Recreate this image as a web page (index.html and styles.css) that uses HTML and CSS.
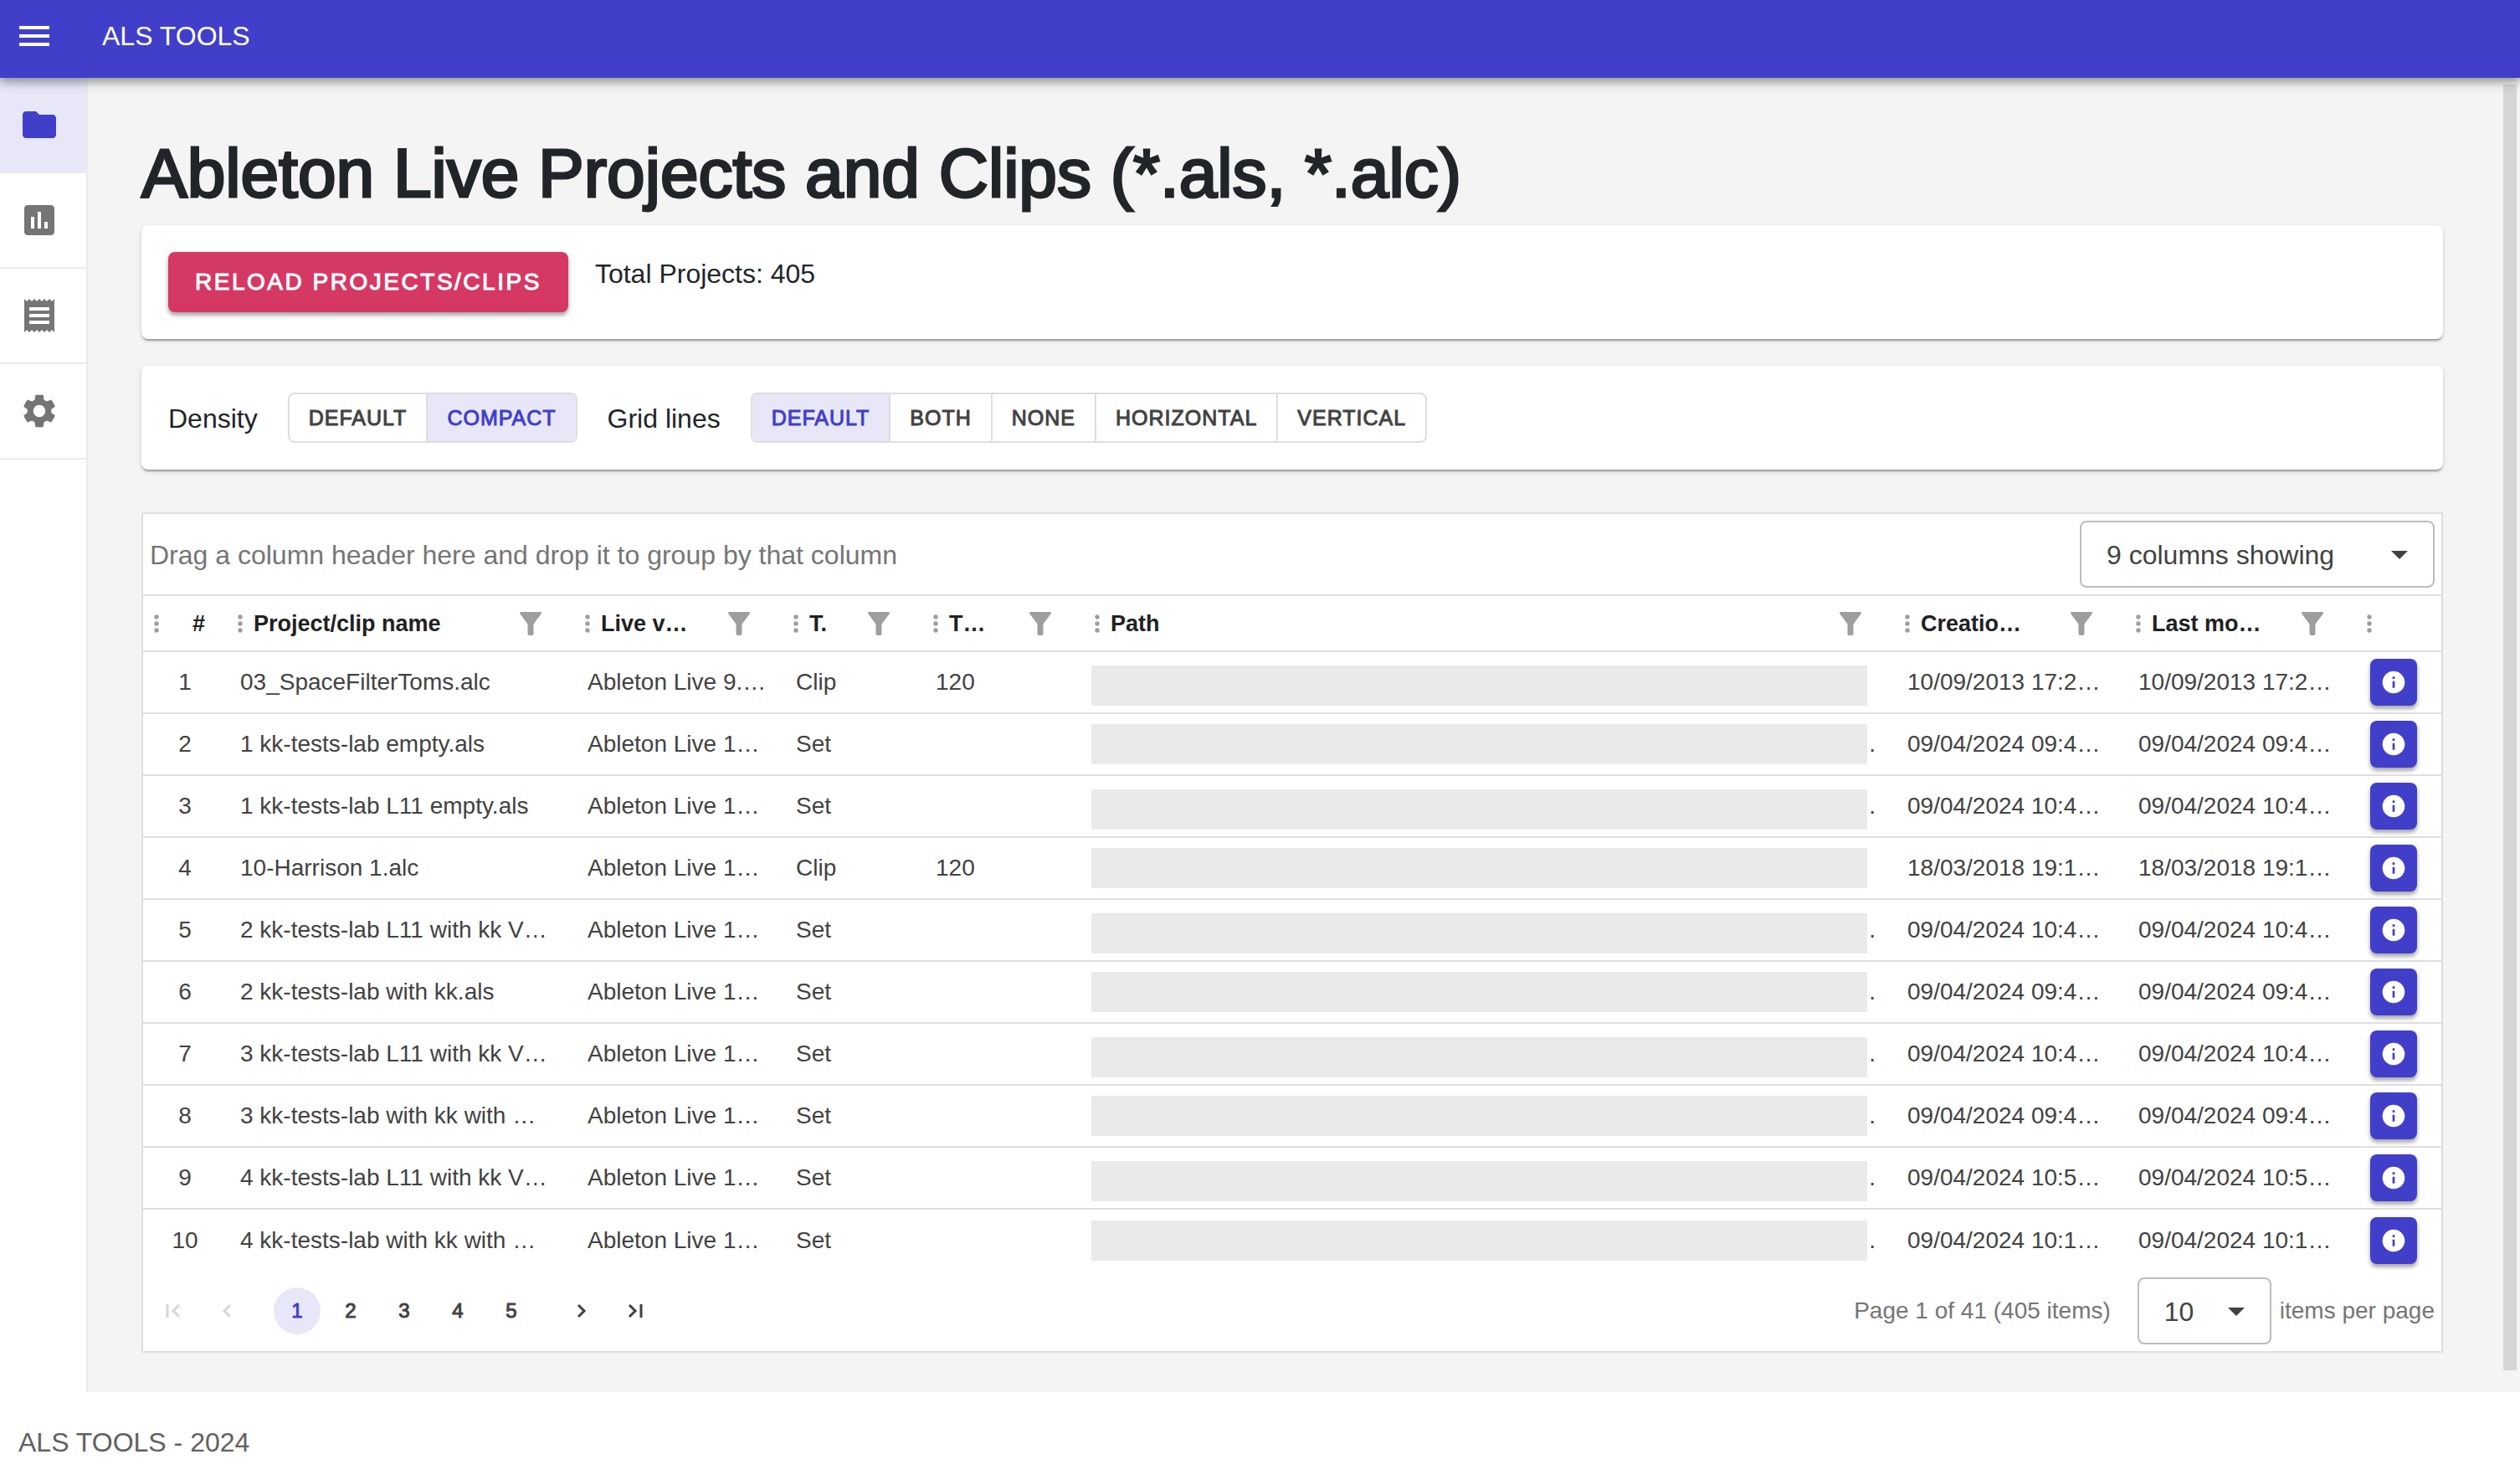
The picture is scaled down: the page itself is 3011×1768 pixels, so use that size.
FILE: index.html
```html
<!DOCTYPE html>
<html lang="en">
<head>
<meta charset="utf-8">
<title>ALS Tools</title>
<link rel="stylesheet" href="styles.css">
</head>
<body>
<svg class="defs" aria-hidden="true">
  <symbol id="filter" viewBox="0 0 26 28"><path d="M1.500 0h23c1.400 0 2 1.500 1 2.600L16.500 14.500V26c0 1.200-.8 2-2 2h-3c-1.200 0-2-.8-2-2V14.500L.5 2.600C-.5 1.500.1 0 1.500 0z"/></symbol>
  <symbol id="dots" viewBox="0 0 6 24"><circle cx="3" cy="4" r="2.700"/><circle cx="3" cy="12" r="2.700"/><circle cx="3" cy="20" r="2.700"/></symbol>
  <symbol id="info" viewBox="0 0 24 24"><path d="M12 2C6.480 2 2 6.480 2 12s4.480 10 10 10 10-4.480 10-10S17.520 2 12 2zm1 15h-2v-6h2v6zm0-8h-2V7h2v2z"/></symbol>
  <symbol id="caret" viewBox="0 0 20 10"><path d="M0 0h20L10 10z"/></symbol>
</svg>
<header class="topbar">
  <button class="menu" aria-label="Menu"><svg viewBox="0 0 36 24"><path d="M0 0h36v4H0zM0 10h36v4H0zM0 20h36v4H0z"/></svg></button>
  <span class="brand">ALS TOOLS</span>
</header>
<div class="layout">
  <nav class="sidebar" aria-label="Sections">
    <a class="item active" href="#projects" aria-label="Projects"><svg viewBox="0 0 24 24"><path d="M10 4H4c-1.100 0-1.990.9-1.990 2L2 18c0 1.100.9 2 2 2h16c1.100 0 2-.9 2-2V8c0-1.100-.9-2-2-2h-8l-2-2z"/></svg></a>
    <a class="item" href="#stats" aria-label="Statistics"><svg viewBox="0 0 24 24"><path d="M19 3H5c-1.100 0-2 .9-2 2v14c0 1.100.9 2 2 2h14c1.100 0 2-.9 2-2V5c0-1.100-.9-2-2-2zM9 17H7v-7h2v7zm4 0h-2V7h2v10zm4 0h-2v-4h2v4z"/></svg></a>
    <a class="item" href="#logs" aria-label="Logs"><svg viewBox="0 0 24 24"><path d="M18 17H6v-2h12v2zm0-4H6v-2h12v2zm0-4H6V7h12v2zM3 22l1.500-1.500L6 22l1.500-1.500L9 22l1.500-1.500L12 22l1.500-1.500L15 22l1.500-1.500L18 22l1.500-1.500L21 22V2l-1.500 1.500L18 2l-1.500 1.500L15 2l-1.500 1.500L12 2l-1.500 1.500L9 2 7.500 3.500 6 2 4.500 3.500 3 2v20z"/></svg></a>
    <a class="item" href="#settings" aria-label="Settings"><svg viewBox="0 0 24 24"><path d="M19.140 12.940c.04-.3.060-.61.060-.94 0-.32-.02-.64-.07-.94l2.030-1.580c.18-.14.230-.41.120-.61l-1.920-3.320c-.12-.22-.37-.29-.59-.22l-2.390.96c-.5-.38-1.030-.7-1.620-.94l-.36-2.540c-.04-.24-.24-.41-.48-.41h-3.840c-.24 0-.43.170-.47.410l-.36 2.540c-.59.240-1.130.570-1.620.940l-2.390-.96c-.22-.08-.47 0-.59.220L2.740 8.870c-.12.210-.08.470.120.610l2.030 1.580c-.05.300-.09.630-.09.940s.02.640.070.940l-2.030 1.580c-.18.140-.23.410-.12.610l1.920 3.320c.12.220.37.290.590.220l2.390-.96c.5.380 1.030.7 1.620.940l.36 2.540c.05.240.24.410.48.410h3.840c.24 0 .44-.17.470-.41l.36-2.540c.59-.24 1.130-.56 1.620-.94l2.390.96c.22.080.47 0 .59-.22l1.920-3.320c.12-.22.070-.47-.12-.61l-2.010-1.580zM12 15.600c-1.980 0-3.600-1.620-3.600-3.600s1.620-3.600 3.600-3.600 3.600 1.620 3.600 3.600-1.620 3.600-3.600 3.600z"/></svg></a>
  </nav>
  <main class="content">
    <h1 class="title">Ableton Live Projects and Clips (*.als, *.alc)</h1>
    <section class="card card-top">
      <button class="reload">RELOAD PROJECTS/CLIPS</button>
      <span class="total">Total Projects: 405</span>
    </section>
    <section class="card card-options">
      <span class="label">Density</span>
      <div class="group" role="group" aria-label="Density"><button class="opt">DEFAULT</button><button class="opt on">COMPACT</button></div>
      <span class="label">Grid lines</span>
      <div class="group" role="group" aria-label="Grid lines"><button class="opt on">DEFAULT</button><button class="opt">BOTH</button><button class="opt">NONE</button><button class="opt">HORIZONTAL</button><button class="opt">VERTICAL</button></div>
    </section>
    <section class="grid">
      <div class="grouping">
        <span class="hint">Drag a column header here and drop it to group by that column</span>
        <div class="pick pick-columns"><select aria-label="Visible columns"><option>9 columns showing</option></select><svg class="caret"><use href="#caret"/></svg></div>
      </div>
      <table class="data">
        <colgroup><col class="c-num"><col class="c-name"><col class="c-ver"><col class="c-type"><col class="c-tempo"><col class="c-path"><col class="c-date"><col class="c-date"><col class="c-act"></colgroup>
        <thead><tr>
          <th><div class="head head-num"><svg class="dots"><use href="#dots"/></svg><span>#</span></div></th>
          <th><div class="head"><svg class="dots"><use href="#dots"/></svg><span>Project/clip name</span><svg class="filter"><use href="#filter"/></svg></div></th>
          <th><div class="head"><svg class="dots"><use href="#dots"/></svg><span>Live v…</span><svg class="filter"><use href="#filter"/></svg></div></th>
          <th><div class="head"><svg class="dots"><use href="#dots"/></svg><span>T.</span><svg class="filter"><use href="#filter"/></svg></div></th>
          <th><div class="head"><svg class="dots"><use href="#dots"/></svg><span>T…</span><svg class="filter"><use href="#filter"/></svg></div></th>
          <th><div class="head"><svg class="dots"><use href="#dots"/></svg><span>Path</span><svg class="filter"><use href="#filter"/></svg></div></th>
          <th><div class="head"><svg class="dots"><use href="#dots"/></svg><span>Creatio…</span><svg class="filter"><use href="#filter"/></svg></div></th>
          <th><div class="head"><svg class="dots"><use href="#dots"/></svg><span>Last mo…</span><svg class="filter"><use href="#filter"/></svg></div></th>
          <th><div class="head"><svg class="dots"><use href="#dots"/></svg></div></th>
        </tr></thead>
        <tbody>
          <tr><td>1</td><td>03_SpaceFilterToms.alc</td><td>Ableton Live 9.…</td><td>Clip</td><td>120</td><td><div class="path whole"><i></i></div></td><td>10/09/2013 17:2…</td><td>10/09/2013 17:2…</td><td><button class="info" aria-label="Details"><svg><use href="#info"/></svg></button></td></tr>
          <tr><td>2</td><td>1 kk-tests-lab empty.als</td><td>Ableton Live 1…</td><td>Set</td><td></td><td><div class="path"><i></i>.</div></td><td>09/04/2024 09:4…</td><td>09/04/2024 09:4…</td><td><button class="info" aria-label="Details"><svg><use href="#info"/></svg></button></td></tr>
          <tr><td>3</td><td>1 kk-tests-lab L11 empty.als</td><td>Ableton Live 1…</td><td>Set</td><td></td><td><div class="path"><i></i>.</div></td><td>09/04/2024 10:4…</td><td>09/04/2024 10:4…</td><td><button class="info" aria-label="Details"><svg><use href="#info"/></svg></button></td></tr>
          <tr><td>4</td><td>10-Harrison 1.alc</td><td>Ableton Live 1…</td><td>Clip</td><td>120</td><td><div class="path whole"><i></i></div></td><td>18/03/2018 19:1…</td><td>18/03/2018 19:1…</td><td><button class="info" aria-label="Details"><svg><use href="#info"/></svg></button></td></tr>
          <tr><td>5</td><td>2 kk-tests-lab L11 with kk V…</td><td>Ableton Live 1…</td><td>Set</td><td></td><td><div class="path"><i></i>.</div></td><td>09/04/2024 10:4…</td><td>09/04/2024 10:4…</td><td><button class="info" aria-label="Details"><svg><use href="#info"/></svg></button></td></tr>
          <tr><td>6</td><td>2 kk-tests-lab with kk.als</td><td>Ableton Live 1…</td><td>Set</td><td></td><td><div class="path"><i></i>.</div></td><td>09/04/2024 09:4…</td><td>09/04/2024 09:4…</td><td><button class="info" aria-label="Details"><svg><use href="#info"/></svg></button></td></tr>
          <tr><td>7</td><td>3 kk-tests-lab L11 with kk V…</td><td>Ableton Live 1…</td><td>Set</td><td></td><td><div class="path"><i></i>.</div></td><td>09/04/2024 10:4…</td><td>09/04/2024 10:4…</td><td><button class="info" aria-label="Details"><svg><use href="#info"/></svg></button></td></tr>
          <tr><td>8</td><td>3 kk-tests-lab with kk with …</td><td>Ableton Live 1…</td><td>Set</td><td></td><td><div class="path"><i></i>.</div></td><td>09/04/2024 09:4…</td><td>09/04/2024 09:4…</td><td><button class="info" aria-label="Details"><svg><use href="#info"/></svg></button></td></tr>
          <tr><td>9</td><td>4 kk-tests-lab L11 with kk V…</td><td>Ableton Live 1…</td><td>Set</td><td></td><td><div class="path"><i></i>.</div></td><td>09/04/2024 10:5…</td><td>09/04/2024 10:5…</td><td><button class="info" aria-label="Details"><svg><use href="#info"/></svg></button></td></tr>
          <tr><td>10</td><td>4 kk-tests-lab with kk with …</td><td>Ableton Live 1…</td><td>Set</td><td></td><td><div class="path"><i></i>.</div></td><td>09/04/2024 10:1…</td><td>09/04/2024 10:1…</td><td><button class="info" aria-label="Details"><svg><use href="#info"/></svg></button></td></tr>
        </tbody>
      </table>
      <div class="pager">
        <nav class="pages" aria-label="Pages">
          <button class="page" disabled aria-label="First page"><svg viewBox="0 0 20 20"><path d="M3 2v16M17 3l-7 7 7 7"/></svg></button>
          <button class="page" disabled aria-label="Previous page"><svg viewBox="0 0 20 20"><path d="M14 3l-7 7 7 7"/></svg></button>
          <div class="numbers"><button class="page current">1</button><button class="page">2</button><button class="page">3</button><button class="page">4</button><button class="page">5</button></div>
          <button class="page" aria-label="Next page"><svg viewBox="0 0 20 20"><path d="M6 3l7 7-7 7"/></svg></button>
          <button class="page" aria-label="Last page"><svg viewBox="0 0 20 20"><path d="M3 3l7 7-7 7M17 2v16"/></svg></button>
        </nav>
        <span class="summary">Page 1 of 41 (405 items)</span>
        <div class="pick pick-size"><select id="size"><option>10</option></select><svg class="caret"><use href="#caret"/></svg></div>
        <label for="size">items per page</label>
      </div>
    </section>
  </main>
  <div class="scroll"></div>
</div>
<footer class="footer">ALS TOOLS - 2024</footer>
</body>
</html>
```

FILE: styles.css
```css
* { box-sizing: border-box; }
body { margin: 0; background: #fff; color: #212529; font: 32px/48px "Liberation Sans", Arial, sans-serif; }
button, select { margin: 0; padding: 0; border: 0; background: none; color: inherit; font: inherit; }
svg { display: block; fill: currentColor; }
.defs { display: none; }

.topbar { position: relative; z-index: 1; display: flex; align-items: center; gap: 63px; height: 93px; padding: 0 23px 7px; background: #413fca; color: #fff; box-shadow: 0 4px 8px rgba(0,0,0,.22), 0 8px 10px rgba(0,0,0,.12), 0 2px 20px rgba(0,0,0,.1); }
.menu svg { width: 36px; height: 24px; }

.layout { display: flex; background: #f4f4f4; }
.sidebar { flex: none; width: 105px; background: #fff; border-right: 2px solid #ebebeb; }
.item { display: flex; align-items: center; height: 114px; padding-left: 23px; border-bottom: 2px solid #ebebeb; color: #757575; }
.item svg { width: 48px; height: 48px; }
.item.active { background: #e8e7f7; color: #413fca; }
.content { flex: 1; min-width: 0; padding: 66px 72px 47px 64px; }
.scroll { flex: none; width: 16px; margin: 8px 4px 26px 0; background: #d6d6d6; }

.title { margin: 0 0 14px; font-size: 82px; line-height: 96px; font-weight: 400; -webkit-text-stroke: 3px #212529; }
.card { display: flex; margin-bottom: 32px; padding: 32px; background: #fff; border-radius: 8px; box-shadow: 0 4px 2px -2px rgba(0,0,0,.2), 0 2px 2px rgba(0,0,0,.14), 0 2px 6px rgba(0,0,0,.12); }
.card-top { gap: 32px; }
.card-options { align-items: center; gap: 36px; margin-bottom: 51px; }
.total, .label, .hint { padding-top: 2px; }
.reload { height: 72px; padding: 0 32px; border-radius: 8px; background: #d63864; color: #fff; font-size: 28px; letter-spacing: .09em; -webkit-text-stroke: 1px; box-shadow: 0 4px 4px rgba(0,0,0,.25), 0 2px 6px rgba(0,0,0,.15); }
.group { display: flex; border: 2px solid #dedede; border-radius: 8px; overflow: hidden; }
.opt { height: 56px; padding: 0 23px; color: #424242; font-size: 25px; letter-spacing: 1px; -webkit-text-stroke: 1px; }
.opt + .opt { border-left: 2px solid #dedede; }
.opt.on { background: #e8e7f7; color: #413fca; }

.grid { border: 2px solid #dedede; background: #fff; color: #424242; }
.grouping { display: flex; align-items: center; justify-content: space-between; padding: 8px; border-bottom: 2px solid #dedede; color: #757575; }
.pick { position: relative; color: #424242; }
.pick select { width: 100%; height: 80px; padding: 2px 30px 0; border: 2px solid #bdbdbd; border-radius: 8px; appearance: none; background: #fff; }
.pick-columns { width: 424px; }
.pick-size { width: 160px; }
.caret { position: absolute; right: 32px; top: 36px; width: 20px; height: 10px; pointer-events: none; }

.data { width: 100%; table-layout: fixed; border-collapse: collapse; font-size: 28px; line-height: 40px; }
.c-num { width: 100px; }
.c-name { width: 415px; }
.c-ver { width: 249px; }
.c-type { width: 167px; }
.c-tempo { width: 193px; }
.c-date { width: 276px; }
.c-act { width: 102px; }
.data th { height: 66px; padding: 0 39px 0 13px; text-align: left; color: #212121; font-size: 27px; }
.data td { height: 74px; padding: 0 0 0 16px; white-space: nowrap; }
.data td:first-child { padding: 0; text-align: center; }
.data td:last-child { padding-left: 17px; }
.data tr { border-bottom: 2px solid #dedede; }
.data tbody tr:last-child { border-bottom: 0; }
.head { display: flex; align-items: center; gap: 13px; white-space: nowrap; }
.head-num { gap: 40px; }
.head span { flex: 1; }
.dots { flex: none; width: 6px; height: 24px; color: #9e9e9e; }
.filter { flex: none; width: 26px; height: 28px; color: #9e9e9e; }
.data td:nth-child(6) { padding: 0 22px 0 9px; }
.path { display: flex; align-items: center; gap: 2px; height: 72px; }
.path.whole { padding-right: 10px; }
.path i { flex: 1; align-self: flex-start; height: 48px; margin-top: 16px; background: #eaeaea; }
.data tr:nth-child(even) .path i { margin-top: 12px; }
.info { display: flex; align-items: center; justify-content: center; width: 56px; height: 56px; border-radius: 8px; background: #413fca; color: #fff; box-shadow: 0 4px 4px rgba(0,0,0,.25), 0 2px 6px rgba(0,0,0,.15); }
.info svg { width: 32px; height: 32px; }

.pager { display: flex; align-items: center; padding: 8px; color: #757575; font-size: 28px; }
.pages { display: flex; gap: 8px; flex: 1; color: #424242; }
.numbers { display: flex; gap: 8px; margin: 0 20px; }
.page { display: flex; align-items: center; justify-content: center; width: 56px; height: 56px; border-radius: 50%; font-size: 24px; -webkit-text-stroke: 1px; }
.page svg { width: 20px; height: 20px; fill: none; stroke: currentColor; stroke-width: 3; }
.page:disabled { color: #d6d6d6; }
.page.current { background: #e8e7f7; color: #413fca; }
.pick-size { margin: 0 10px 0 32px; font-size: 32px; }

.footer { padding: 36px 22px; color: #616161; }
```
